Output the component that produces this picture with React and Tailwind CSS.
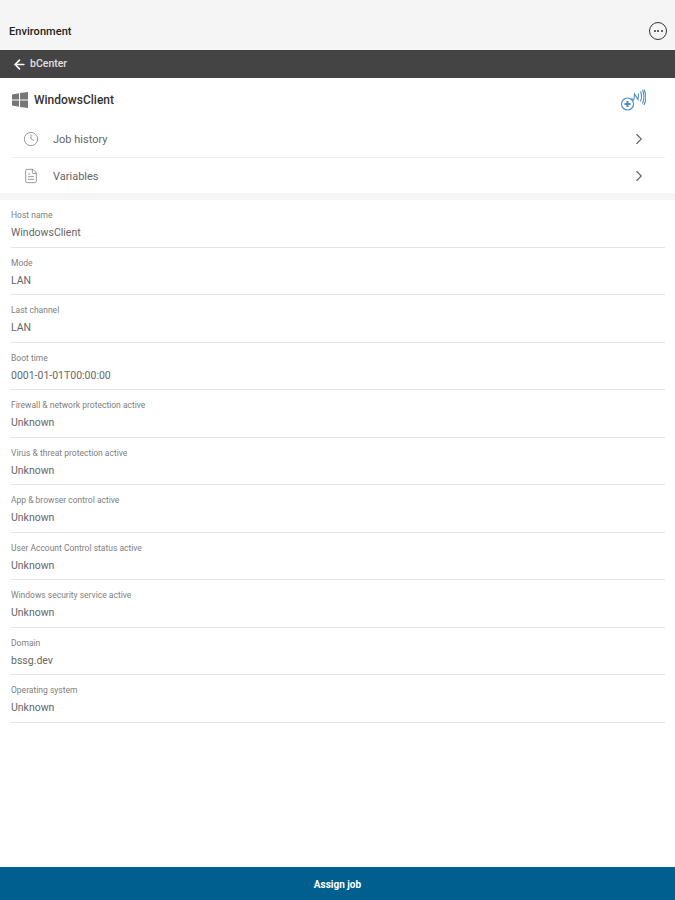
import React from "react";
import { ChevronRight, Clock, FileText, ArrowLeft } from "lucide-react";

const fields = [
  { label: "Host name", value: "WindowsClient" },
  { label: "Mode", value: "LAN" },
  { label: "Last channel", value: "LAN" },
  { label: "Boot time", value: "0001-01-01T00:00:00" },
  { label: "Firewall & network protection active", value: "Unknown" },
  { label: "Virus & threat protection active", value: "Unknown" },
  { label: "App & browser control active", value: "Unknown" },
  { label: "User Account Control status active", value: "Unknown" },
  { label: "Windows security service active", value: "Unknown" },
  { label: "Domain", value: "bssg.dev" },
  { label: "Operating system", value: "Unknown" },
];

function WindowsLogo() {
  return (
    <svg width="16" height="16" viewBox="0 0 16 16" fill="#777777">
      <path d="M0 2.4 7 1.3V7.5H0Z" />
      <path d="M8 1.1 16 0V7.5H8Z" />
      <path d="M0 8.5H7V14.7L0 13.6Z" />
      <path d="M8 8.5H16V16L8 14.9Z" />
    </svg>
  );
}

function SignalIcon() {
  return (
    <svg
      width="26"
      height="24"
      viewBox="0 0 26 24"
      fill="none"
      stroke="#4a8cc6"
      strokeWidth="1.1"
    >
      <circle cx="7.5" cy="16" r="6" />
      <path d="M4.5 16H10.5M7.5 13V19" strokeWidth="2" />
      <path d="M11.5 10.5 14 12.5" />
      <path d="M14 11.5 14.5 6 18 11.5 18.5 5.5" />
      <path d="M20.5 3.5c1.2 3 1.2 7 0 10" />
      <path d="M22.5 2c1.8 4 1.8 9 0 13.5" />
      <path d="M24 1.5c2.4 5 2.4 10.5 0 15.5" />
    </svg>
  );
}

function NavRow({ icon: Icon, label, border, height, labelPad }) {
  return (
    <div
      className={`flex items-center ml-3 mr-[10px] pl-[11px] pr-[17px] ${height} ${
        border ? "border-b border-[#ececec]" : ""
      }`}
    >
      <Icon size={16} strokeWidth={1.2} className="text-[#808080]" />
      <span className={`ml-[14px] text-[11px] text-[#666] ${labelPad}`}>{label}</span>
      <ChevronRight size={18} strokeWidth={1.5} className="ml-auto text-[#666]" />
    </div>
  );
}

export default function App() {
  return (
    <div className="h-[900px] flex flex-col bg-white font-['Roboto',sans-serif]">
      <div className="h-[50px] bg-[#f5f5f5] flex items-end justify-between pl-[9px] pr-[8px] pb-[8px]">
        <span className="text-[11px] font-medium tracking-[0.05px] text-[#222] leading-[20px]">
          Environment
        </span>
        <div className="w-[18px] h-[18px] mb-[2px] rounded-full border-[1.5px] border-[#333] flex items-center justify-center gap-[1.5px]">
          <span className="w-[2px] h-[2px] rounded-full bg-[#333]" />
          <span className="w-[2px] h-[2px] rounded-full bg-[#333]" />
          <span className="w-[2px] h-[2px] rounded-full bg-[#333]" />
        </div>
      </div>
      <div className="h-[28px] bg-[#444444] flex items-center pl-[12px] text-white">
        <ArrowLeft size={15} strokeWidth={2.5} />
        <span className="ml-[3px] text-[10.5px] font-medium text-[#e0e0e0]">bCenter</span>
      </div>
      <div className="h-[43px] flex items-center pl-[12px] pr-[29px]">
        <WindowsLogo />
        <span className="ml-[6px] pt-[1px] text-[12px] font-medium text-[#333]">WindowsClient</span>
        <div className="ml-auto">
          <SignalIcon />
        </div>
      </div>
      <NavRow icon={Clock} label="Job history" border height="h-[37px]" labelPad="pt-[2px]" />
      <NavRow icon={FileText} label="Variables" height="h-[35px]" labelPad="pt-[4px]" />
      <div className="h-[7px] bg-[#f5f5f5]" />
      <div className="pl-[11px] pr-[10px]">
        {fields.map((field) => (
          <div
            key={field.label}
            className="h-[47.5px] border-b border-[#e4e4e4] pt-[10px]"
          >
            <div className="text-[8.5px] leading-[11px] text-[#808080]">{field.label}</div>
            <div className="mt-[5px] text-[10.5px] leading-[14px] text-[#666]">
              {field.value}
            </div>
          </div>
        ))}
      </div>
      <div className="mt-auto h-[33px] bg-[#005f8f] flex items-center justify-center pt-[2px]">
        <span className="text-[10px] font-bold text-white">Assign job</span>
      </div>
    </div>
  );
}
